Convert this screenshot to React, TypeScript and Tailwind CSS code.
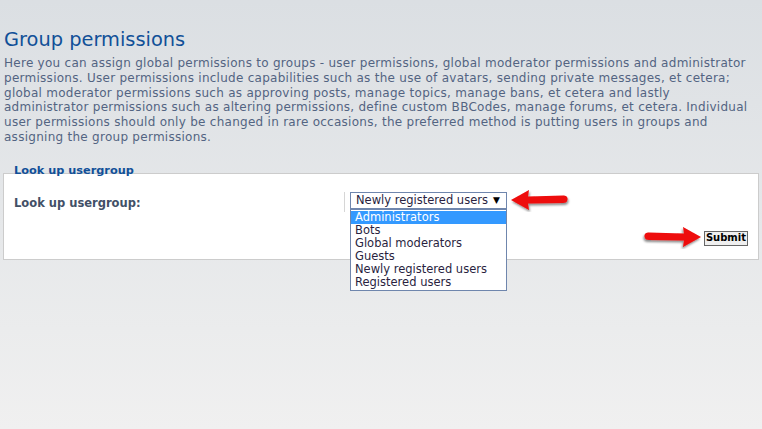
import React from "react";

const lines = [
  "Here you can assign global permissions to groups - user permissions, global moderator permissions and administrator",
  "permissions. User permissions include capabilities such as the use of avatars, sending private messages, et cetera;",
  "global moderator permissions such as approving posts, manage topics, manage bans, et cetera and lastly",
  "administrator permissions such as altering permissions, define custom BBCodes, manage forums, et cetera. Individual",
  "user permissions should only be changed in rare occasions, the preferred method is putting users in groups and",
  "assigning the group permissions.",
];

const groups = [
  "Administrators",
  "Bots",
  "Global moderators",
  "Guests",
  "Newly registered users",
  "Registered users",
];

function RedArrow({ flip }: { flip?: boolean }) {
  return (
    <svg width="62" height="24" viewBox="0 0 62 24" className={flip ? "-scale-x-100" : ""}>
      <defs>
        <filter id={flip ? "shR" : "shL"} x="-20%" y="-40%" width="140%" height="180%">
          <feDropShadow dx="1" dy="2" stdDeviation="1.2" floodColor="#000" floodOpacity="0.45" />
        </filter>
      </defs>
      <path
        d="M2 12 L20 2 L19 8.5 L55 7.5 Q59 8 58.5 11.5 Q58 15 54 15 L19 15.5 L20 22 Z"
        fill="#ee0a0a"
        filter={`url(#${flip ? "shR" : "shL"})`}
      />
    </svg>
  );
}

export default function App() {
  return (
    <div
      className="relative h-[429px] w-[762px] overflow-hidden bg-gradient-to-b from-[#dbdfe3] to-[#f0f0f0] text-[#536482]"
      style={{ fontFamily: "'DejaVu Sans', Verdana, sans-serif" }}
    >
      <h1 className="pl-[4px] pt-[27px] text-[19.4px] leading-[26px] text-[#115098]">Group permissions</h1>
      <p className="pl-[4px] pt-[3px] text-[12px] leading-[14.8px] tracking-[0.27px]">
        {lines.map((l) => (
          <span key={l} className="block whitespace-nowrap">
            {l}
          </span>
        ))}
      </p>

      <div className="mx-[3px] mt-[18px]">
        <div className="relative z-10 -mb-[5px] pl-[11px] text-[11.3px] font-bold leading-[15px] text-[#115098]">
          Look up usergroup
        </div>
        <div className="h-[87px] border border-[#cccccc] bg-white">
          <div className="flex items-start pt-[18px]">
            <div className="w-[340px] pl-[10px] pt-[3px] text-[11.5px] font-bold text-[#425067]">
              Look up usergroup:
            </div>
            <div className="flex border-l border-[#d6d6d6] pl-[5px]">
              <div className="relative">
                <div className="flex h-[17px] w-[157px] items-center justify-between whitespace-nowrap border border-[#6f86ad] bg-white pl-[5px] pr-[6px] text-[11.5px] text-[#2a1f3f]">
                  <span>Newly registered users</span>
                  <span className="text-[9px] text-black">▼</span>
                </div>
                <div className="absolute left-0 top-[17px] z-20 w-[157px] border border-[#6f86ad] bg-white py-[1px] text-[11.5px] leading-[13px] text-[#2a1f3f]">
                  {groups.map((g, i) => (
                    <div
                      key={g}
                      className={i === 0 ? "whitespace-nowrap bg-[#3399ff] pl-[4px] text-white" : "whitespace-nowrap pl-[4px]"}
                    >
                      {g}
                    </div>
                  ))}
                </div>
              </div>
              <div className="ml-[2px] -mt-[4px]">
                <RedArrow />
              </div>
            </div>
          </div>
          <div className="flex items-center justify-end pr-[10px] pt-[15px]">
            <div className="-mt-[2px] mr-[1px]">
              <RedArrow flip />
            </div>
            <button className="h-[15px] border border-[#666] bg-[#efefef] px-[1px] text-[10px] font-bold leading-[12px] text-black">
              Submit
            </button>
          </div>
        </div>
      </div>
    </div>
  );
}
